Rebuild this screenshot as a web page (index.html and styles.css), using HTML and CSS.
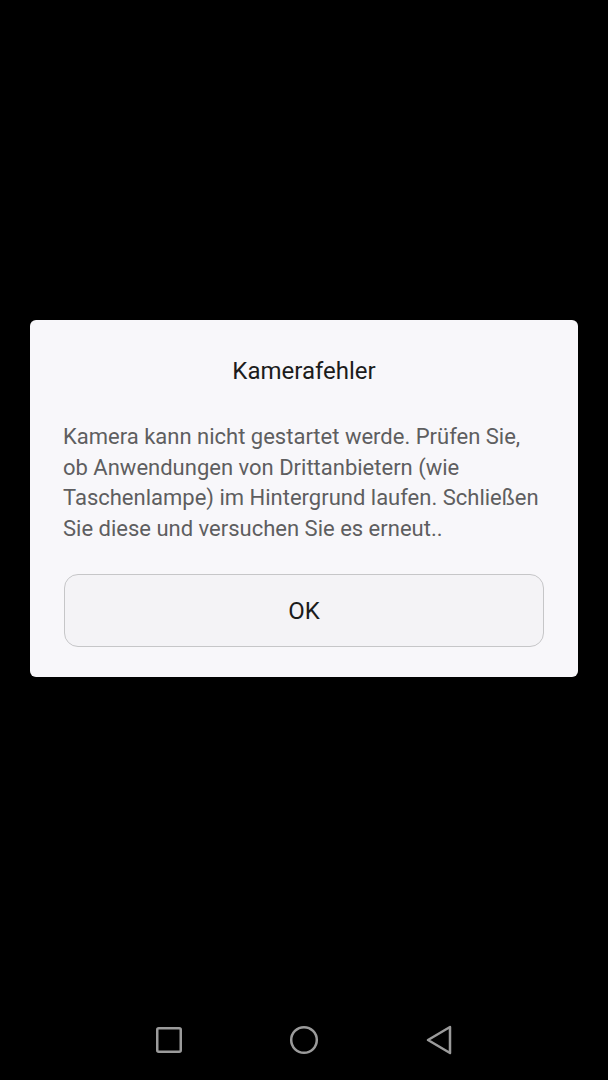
FILE: index.html
```html
<!DOCTYPE html>
<html lang="de">
<head>
<meta charset="utf-8">
<title>Kamerafehler</title>
<link rel="stylesheet" href="styles.css">
</head>
<body>
<div class="screen">
  <main class="content">
    <section class="dialog">
      <h1 class="dialog-title">Kamerafehler</h1>
      <p class="dialog-text">Kamera kann nicht gestartet werde. Prüfen Sie, ob Anwendungen von Drittanbietern (wie Taschenlampe) im Hintergrund laufen. Schließen Sie diese und versuchen Sie es erneut..</p>
      <button class="dialog-btn">OK</button>
    </section>
  </main>
  <nav class="navbar">
    <svg class="nav-icon" width="30" height="30" viewBox="0 0 30 30"><rect x="3.25" y="3.25" width="23.5" height="23.5" rx="1.5" fill="none" stroke="#9b9b9b" stroke-width="2.5"/></svg>
    <svg class="nav-icon" width="30" height="30" viewBox="0 0 30 30"><circle cx="15" cy="15" r="12.8" fill="none" stroke="#9b9b9b" stroke-width="2.5"/></svg>
    <svg class="nav-icon" width="30" height="32" viewBox="0 0 30 32"><path d="M26 3 L4 16 L26 29 Z" fill="none" stroke="#9b9b9b" stroke-width="2.5" stroke-linejoin="round"/></svg>
  </nav>
</div>
</body>
</html>
```
FILE: styles.css
```css
html, body {
  margin: 0;
  padding: 0;
  background: #000;
}
.screen {
  width: 608px;
  height: 1080px;
  display: flex;
  flex-direction: column;
  font-family: Roboto, "Liberation Sans", sans-serif;
}
.content {
  flex: 1;
  padding: 320px 30px 0;
}
.dialog {
  background: #f8f7fa;
  border-radius: 6px;
  padding: 36px 34px 30px;
  display: flex;
  flex-direction: column;
}
.dialog-title {
  margin: 0;
  font-size: 24px;
  font-weight: 400;
  line-height: 30px;
  color: #1c1c1c;
  text-align: center;
}
.dialog-text {
  margin: 36px 0 0 -1px;
  font-size: 22px;
  line-height: 30.6px;
  color: #5e5e60;
}
.dialog-btn {
  margin-top: 30px;
  height: 73px;
  background: #f4f3f6;
  border: 1px solid #c6c6c8;
  border-radius: 14px;
  font-family: Roboto, "Liberation Sans", sans-serif;
  font-size: 24px;
  color: #1c1c1c;
}
.navbar {
  height: 80px;
  display: flex;
  align-items: center;
  justify-content: center;
  gap: 105px;
}
.nav-icon {
  display: block;
}
```
